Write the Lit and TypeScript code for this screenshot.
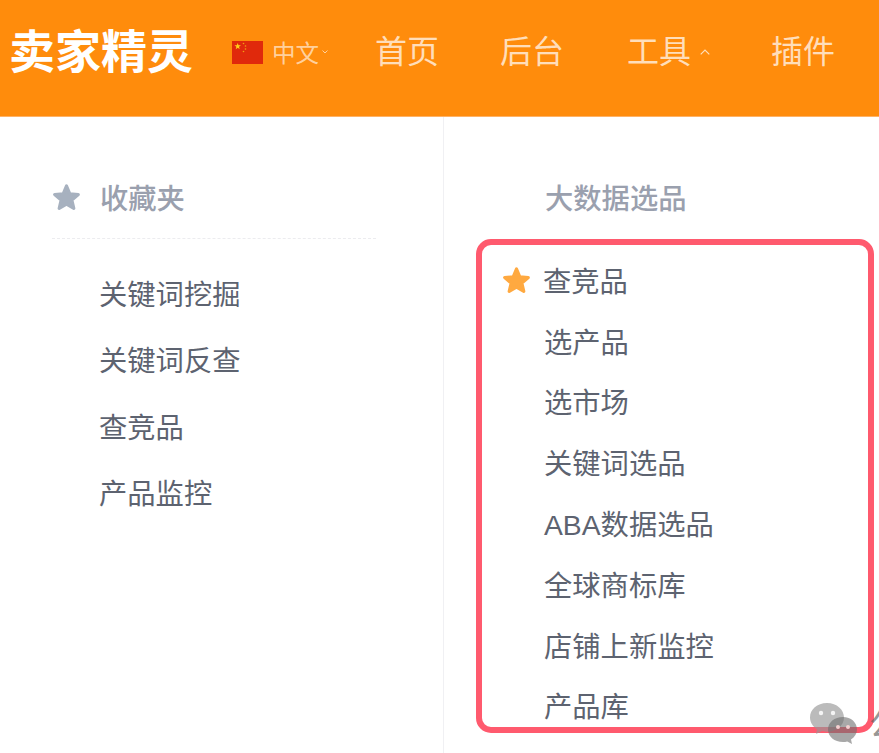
import { LitElement, html, css, svg } from "lit";
import { customElement } from "lit/decorators.js";

const star = (cls: string) => html`<svg class="star ${cls}" viewBox="1.500 1.500 21 21"><polygon points="12,3 14.600,9.100 21.200,9.700 16.200,14 17.700,20.500 12,17.100 6.300,20.500 7.800,14 2.800,9.700 9.400,9.100" fill="currentColor" stroke="currentColor" stroke-width="2.400" stroke-linejoin="round"></polygon></svg>`;

@customElement("app-root")
export class AppRoot extends LitElement {
  static styles = css`
    :host {
      display: block;
      width: 879px;
      height: 753px;
      overflow: hidden;
      position: relative;
      background: #fff;
      font-family: "Liberation Sans", "Noto Sans CJK SC", sans-serif;
    }
    .top {
      height: 116px;
      background: #ff8c0c;
      border-bottom: 1px solid #ffb266;
      display: flex;
      align-items: flex-start;
    }
    .logo {
      margin: 23px 0 0 9px;
      width: 183px;
      font-size: 46px;
      line-height: 58px;
      font-weight: 700;
      color: #fff;
      white-space: nowrap;
    }
    .flag { margin: 41px 0 0 40px; width: 31px; height: 23px; display: block; }
    .lang {
      margin: 37px 0 0 9px;
      font-size: 23.500px;
      line-height: 34px;
      color: rgba(255, 255, 255, 0.62);
      white-space: nowrap;
    }
    .lang-caret { display: block; margin: 50px 0 0 3px; width: 6px; height: 4px; }
    .nav { display: flex; margin: 30px 0 0 47px; }
    .nav-item {
      font-size: 32px;
      line-height: 44px;
      color: rgba(255, 255, 255, 0.72);
      white-space: nowrap;
      width: 64px;
    }
    .nav-1 { margin-right: 61px; }
    .nav-2 { margin-right: 63px; }
    .nav-3 { margin-right: 9px; }
    .nav-caret { display: block; margin: 19px 61px 0 0; width: 10px; height: 6px; }
    .body { display: flex; height: 636px; }
    .left {
      width: 324px;
      border-right: 1px solid #f0f0f3;
      padding: 60px 67px 0 52px;
    }
    .fav {
      display: flex;
      align-items: center;
      height: 44px;
      font-size: 28.300px;
      line-height: 44px;
      font-weight: 500;
      color: #9aa0ae;
      padding-bottom: 17px;
      border-bottom: 1px dashed #ececef;
    }
    .star { display: block; width: 28px; height: 28px; flex: none; }
    .fav .star { margin: 0 0 4px 1px; width: 27px; height: 27px; }
    .grey { color: #a7b1bf; }
    .amber { color: #ffa940; }
    .fav span { margin-left: 20px; }
    .left ul { list-style: none; margin: 23px 0 0; padding: 0 0 0 47px; }
    .left li {
      height: 66.400px;
      line-height: 66.400px;
      font-size: 28.300px;
      color: #5d6370;
      white-space: nowrap;
    }
    .right { flex: 1; padding: 60px 5px 0 32px; min-width: 0; }
    .title {
      height: 44px;
      line-height: 44px;
      font-size: 28.300px;
      font-weight: 500;
      color: #9aa0ae;
      padding-left: 69px;
      margin-bottom: 18px;
    }
    .box {
      list-style: none;
      margin: 0;
      padding: 4px 0 0 20px;
      height: 494px;
      box-sizing: border-box;
      border: 6px solid #ff5a6e;
      border-radius: 15px;
      overflow: hidden;
    }
    .box li {
      display: flex;
      align-items: center;
      height: 60.800px;
      font-size: 28.300px;
      color: #5d6370;
      white-space: nowrap;
      padding-left: 42px;
    }
    .box li.starred { padding-left: 1px; }
    .box li.starred .star { margin: 2px 13px 0 0; width: 27px; height: 27px; }
    .mark { position: absolute; left: 808px; top: 702px; width: 52px; height: 44px; }
    .mark-text {
      position: absolute;
      left: 869px;
      top: 702px;
      font-size: 34px;
      line-height: 44px;
      color: rgba(90, 90, 90, 0.65);
      white-space: nowrap;
    }
  `;

  render() {
    const left = ["关键词挖掘", "关键词反查", "查竞品", "产品监控"];
    const items = ["选产品", "选市场", "关键词选品", "ABA数据选品", "全球商标库", "店铺上新监控", "产品库"];
    return html`
      <header class="top">
        <div class="logo">卖家精灵</div>
        <svg class="flag" viewBox="0 0 31 23">
          <rect width="31" height="23" fill="#e0290c"></rect>
          <polygon points="5.700,2 6.500,4.300 9,4.300 7,5.800 7.700,8.200 5.700,6.800 3.700,8.200 4.400,5.800 2.400,4.300 4.900,4.300" fill="#ffd21a"></polygon>
          ${svg`<g fill="#f2a012"><circle cx="11.500" cy="2.500" r=".8"></circle><circle cx="13.500" cy="5" r=".8"></circle><circle cx="13.500" cy="8" r=".8"></circle><circle cx="11.500" cy="10.500" r=".8"></circle></g>`}
        </svg>
        <div class="lang">中文</div>
        <svg class="lang-caret" viewBox="0 0 6 4"><path d="M.5 .5L3 3l2.500-2.500" fill="none" stroke="rgba(255,255,255,.6)"></path></svg>
        <nav class="nav">
          <div class="nav-item nav-1">首页</div>
          <div class="nav-item nav-2">后台</div>
          <div class="nav-item nav-3">工具</div>
          <svg class="nav-caret" viewBox="0 0 10 6"><path d="M.7 5.300L5 1l4.300 4.300" fill="none" stroke="rgba(255,255,255,.72)" stroke-width="1.200"></path></svg>
          <div class="nav-item">插件</div>
        </nav>
      </header>
      <main class="body">
        <section class="left">
          <div class="fav">${star("grey")}<span>收藏夹</span></div>
          <ul>${left.map((t) => html`<li>${t}</li>`)}</ul>
        </section>
        <section class="right">
          <div class="title">大数据选品</div>
          <ul class="box">
            <li class="starred">${star("amber")}<span>查竞品</span></li>
            ${items.map((t) => html`<li>${t}</li>`)}
          </ul>
        </section>
      </main>
      <svg class="mark" viewBox="0 0 52 44">
        <path d="M19 1C9 1 2 7.500 2 15.500c0 5 3 9 7 12l-1 4.500 6-3c2 .6 3.500 .8 5 .8 10 0 17-6.800 17-14.300S29 1 19 1z" fill="rgba(150,150,150,.65)"></path>
        <path d="M35 15c-8.500 0-15 5.400-15 12.500S26.500 40 35 40c1.500 0 3-.2 4.200-.6L44 42l-1-4.500c3.800-2.500 6-6 6-10C49 20.400 43 15 35 15z" fill="rgba(110,110,110,.6)"></path>
        <circle cx="13" cy="11" r="2.200" fill="#f4f4f4"></circle><circle cx="25" cy="11" r="2.200" fill="#f4f4f4"></circle>
        <circle cx="30" cy="25" r="2" fill="#f4d0d0"></circle><circle cx="40" cy="25" r="2" fill="#f4d0d0"></circle>
      </svg>
      <div class="mark-text">公</div>
    `;
  }
}
